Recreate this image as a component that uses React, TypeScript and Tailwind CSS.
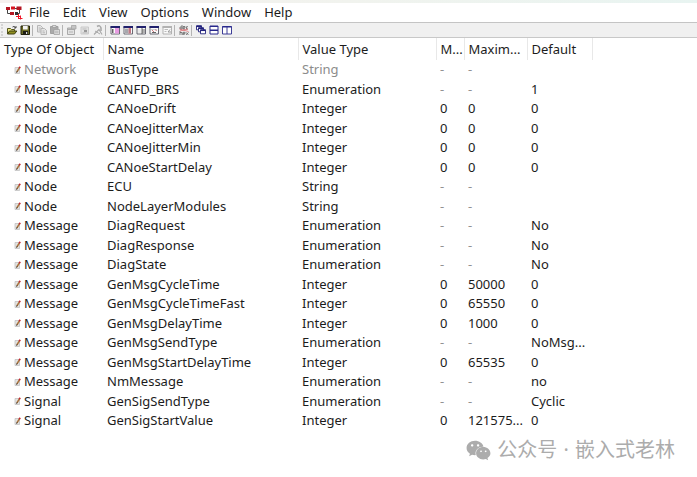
import React from 'react';
import { FaWeixin } from 'react-icons/fa6';

type Row = {
  object: string;
  name: string;
  valueType: string;
  min: string;
  max: string;
  value: string;
  inactive?: boolean;
};

const menus = ['File', 'Edit', 'View', 'Options', 'Window', 'Help'];

const columns = [
  { label: 'Type Of Object', width: 'w-[103px]' },
  { label: 'Name', width: 'w-[195px]' },
  { label: 'Value Type', width: 'w-[138px]' },
  { label: 'M...', width: 'w-[28px]' },
  { label: 'Maxim...', width: 'w-[63px]' },
  { label: 'Default', width: 'w-[65px]' },
];

const rows: Row[] = [
  { object: 'Network', name: 'BusType', valueType: 'String', min: '-', max: '-', value: '', inactive: true },
  { object: 'Message', name: 'CANFD_BRS', valueType: 'Enumeration', min: '-', max: '-', value: '1' },
  { object: 'Node', name: 'CANoeDrift', valueType: 'Integer', min: '0', max: '0', value: '0' },
  { object: 'Node', name: 'CANoeJitterMax', valueType: 'Integer', min: '0', max: '0', value: '0' },
  { object: 'Node', name: 'CANoeJitterMin', valueType: 'Integer', min: '0', max: '0', value: '0' },
  { object: 'Node', name: 'CANoeStartDelay', valueType: 'Integer', min: '0', max: '0', value: '0' },
  { object: 'Node', name: 'ECU', valueType: 'String', min: '-', max: '-', value: '' },
  { object: 'Node', name: 'NodeLayerModules', valueType: 'String', min: '-', max: '-', value: '' },
  { object: 'Message', name: 'DiagRequest', valueType: 'Enumeration', min: '-', max: '-', value: 'No' },
  { object: 'Message', name: 'DiagResponse', valueType: 'Enumeration', min: '-', max: '-', value: 'No' },
  { object: 'Message', name: 'DiagState', valueType: 'Enumeration', min: '-', max: '-', value: 'No' },
  { object: 'Message', name: 'GenMsgCycleTime', valueType: 'Integer', min: '0', max: '50000', value: '0' },
  { object: 'Message', name: 'GenMsgCycleTimeFast', valueType: 'Integer', min: '0', max: '65550', value: '0' },
  { object: 'Message', name: 'GenMsgDelayTime', valueType: 'Integer', min: '0', max: '1000', value: '0' },
  { object: 'Message', name: 'GenMsgSendType', valueType: 'Enumeration', min: '-', max: '-', value: 'NoMsg...' },
  { object: 'Message', name: 'GenMsgStartDelayTime', valueType: 'Integer', min: '0', max: '65535', value: '0' },
  { object: 'Message', name: 'NmMessage', valueType: 'Enumeration', min: '-', max: '-', value: 'no' },
  { object: 'Signal', name: 'GenSigSendType', valueType: 'Enumeration', min: '-', max: '-', value: 'Cyclic' },
  { object: 'Signal', name: 'GenSigStartValue', valueType: 'Integer', min: '0', max: '121575...', value: '0' },
];

function AppLogo() {
  return (
    <svg viewBox="0 0 17 14" className="h-[14px] w-[17px] shrink-0" aria-hidden="true">
      <path d="M1.5 4v3.5h3M8.5 2.5h3M13.5 4v3.5h-3M5 2.5h1" fill="none" stroke="#444" />
      <rect x="0" y="1" width="4" height="3" fill="#b51622" />
      <rect x="5" y="0.5" width="4" height="3" fill="#d8121e" />
      <rect x="10.5" y="0.5" width="5" height="3.5" fill="#b51622" />
      <rect x="4" y="6" width="4" height="3" fill="#b51622" />
      <rect x="9" y="6" width="3" height="3" fill="#333" />
      <path d="M10 10.5h5M12.5 8v4M14.5 9.5v4M12 12.5h4.5" fill="none" stroke="#f01828" />
    </svg>
  );
}

function PencilIcon() {
  return (
    <svg viewBox="0 0 8 8" className="h-2 w-2 shrink-0" aria-hidden="true">
      <path d="M1 1.5h4.5v6H1z" fill="#e4e4e4" stroke="#bcbcbc" strokeWidth="0.7" />
      <path d="M2.8 6 5.4 2" stroke="#a8743e" strokeWidth="1.5" />
      <path d="M2.5 6.6l.6-1.2" stroke="#333" />
      <path d="M5.2 2.2 6.2.7" stroke="#c2252d" strokeWidth="1.6" />
    </svg>
  );
}

function OpenIcon() {
  return (
    <>
      <path d="M0.5 9V3.5h3l1 1h3V6" fill="#e6e37a" stroke="#55551a" />
      <path d="M0.5 9 2.5 6h7.3L7.5 9z" fill="#8f8f20" stroke="#3f3f10" />
      <path d="M5.5 2q1.5-1.5 3 .5M9 1v2H7" fill="none" stroke="#222" strokeWidth="0.8" />
    </>
  );
}

function SaveIcon() {
  return (
    <>
      <path d="M1 1h8.5v8.5H1z" fill="#6b6b24" stroke="#22220c" />
      <path d="M3 1h4.7v3.5H3z" fill="#f4f4f4" />
      <path d="M3 6h5v3.5H3z" fill="#1c1c14" />
      <path d="M6 7h1.2v2H6z" fill="#ddd" />
    </>
  );
}

function CopyIcon() {
  return (
    <g fill="#e6e6e6" stroke="#b0b0b0" strokeWidth="0.9">
      <path d="M0.5 0.5h3L5.5 2.5V7h-5z" />
      <path d="M4 3.5h3.5l2 2v4H4z" />
      <path d="M5.5 6h2M5.5 7.8h2.5M1.7 3h2M1.7 5h2" />
    </g>
  );
}

function PasteIcon() {
  return (
    <>
      <path d="M0.5 1.5H8v7H0.5z" fill="#aaa" stroke="#a0a0a0" />
      <path d="M2.5 0.5H6v2H2.5z" fill="#ddd" stroke="#989898" strokeWidth="0.7" />
      <path d="M4 4.5h5.5v5H4z" fill="#e4e4e4" stroke="#a0a0a0" strokeWidth="0.8" />
      <path d="M5 6.2h3.5M5 7.8h3.5" stroke="#a0a0a0" strokeWidth="0.7" />
    </>
  );
}

function FormIcon() {
  return (
    <>
      <path d="M0.5 3h7v6.5h-7z" fill="#e2e2e2" stroke="#aaa" />
      <path d="M1 3.5h6V5H1z" fill="#aaa" />
      <path d="M4.5 0.5H9V4H4.5z" fill="#c4c4c4" stroke="#a4a4a4" strokeWidth="0.8" />
      <path d="M2 7h4" stroke="#b4b4b4" />
    </>
  );
}

function SheetIcon() {
  return (
    <>
      <path d="M1 2h7.5v7H1z" fill="#e2e2e2" stroke="#cacaca" />
      <path d="M2.5 4h4M2.5 7.8h5" stroke="#b4b4b4" strokeWidth="0.8" />
      <path d="M4 5h3v2H4z" fill="#999" />
    </>
  );
}

function ToolIcon() {
  return (
    <g fill="none" stroke="#aaa">
      <path d="M4 1.5q3-2 4 1.5v3" strokeWidth="1.6" />
      <path d="M1 9.5 6 4.5l3 5" strokeWidth="1.2" />
      <path d="M2 6l5 3" />
    </g>
  );
}

type WindowIconProps = { children?: React.ReactNode; frame?: string; bar?: string };

function WindowIcon({ children, frame = '#5c5c66', bar = '#20206c' }: WindowIconProps) {
  return (
    <>
      <path d="M1 1.5h8.5V9H1z" fill="#fafafa" stroke={frame} strokeWidth="0.9" />
      <path d="M0.5 1H10v2H0.5z" fill={bar} />
      {children}
    </>
  );
}

function DecHexIcon() {
  return (
    <>
      <g fill="none" stroke="#555" strokeWidth="0.7">
        <path d="M3 0v4H1V2h2M4 3h2V1.5H4V4h2M9 1.7H7.5V4H9" />
        <path d="M1 6v4M1 7.5h2V10M4 8.7h2V7.3H4V10h2M7 7.3l2.5 2.7M9.5 7.3 7 10" />
      </g>
      <path d="M0.5 4 9.5 6.5M1 6l8-2" stroke="#dc5c62" strokeWidth="0.7" />
    </>
  );
}

function CascadeIcon() {
  return (
    <g fill="#fff" stroke="#20207c" strokeWidth="0.9">
      {[0, 2, 4].map((n) => (
        <g key={n}>
          <path d={`M${0.5 + n} ${0.8 + n}h5v4h-5z`} />
          <path d={`M${0.5 + n} ${1.3 + n}h5`} strokeWidth="1.5" />
        </g>
      ))}
    </g>
  );
}

const toolGroups: { label: string; disabled?: boolean; icon: React.ReactNode }[][] = [
  [
    { label: 'Open', icon: <OpenIcon /> },
    { label: 'Save', icon: <SaveIcon /> },
  ],
  [
    { label: 'Copy', disabled: true, icon: <CopyIcon /> },
    { label: 'Paste', disabled: true, icon: <PasteIcon /> },
  ],
  [
    { label: 'Edit object', disabled: true, icon: <FormIcon /> },
    { label: 'New object', disabled: true, icon: <SheetIcon /> },
    { label: 'Consistency check', disabled: true, icon: <ToolIcon /> },
  ],
  [
    {
      label: 'Overall view',
      icon: (
        <WindowIcon>
          <path d="M5 3h4v5.5H5z" fill="#e79be2" />
          <path d="M2.5 4v4M2.5 5H4M2.5 7H4" stroke="#444" strokeWidth="0.8" />
        </WindowIcon>
      ),
    },
    {
      label: 'Signal list',
      icon: (
        <WindowIcon>
          <path d="M2 3.5h3v5H2z" fill="#b4b4b8" />
          <path d="M5.5 3h2.5v5.5H5.5z" fill="#d4707c" />
          <path d="M2 5h6M2 7h6" stroke="#8a8a94" strokeWidth="0.6" />
        </WindowIcon>
      ),
    },
    {
      label: 'Message list',
      icon: (
        <WindowIcon>
          <path d="M6 3v6M6 5h3M6 7h3" stroke="#444" strokeWidth="0.8" />
          <path d="M2 5h3M2 7h3" stroke="#ccc" strokeWidth="0.7" />
        </WindowIcon>
      ),
    },
    {
      label: 'Attribute list',
      icon: (
        <WindowIcon>
          <path d="M2 4.5h6" stroke="#bbb" strokeWidth="0.7" />
          <path d="M3 5 5 7M6.5 4.5l1 1.5" stroke="#c8666c" strokeWidth="0.9" />
          <path d="M3 7.5h4" stroke="#666" />
        </WindowIcon>
      ),
    },
    {
      label: 'Value tables',
      disabled: true,
      icon: (
        <WindowIcon frame="#aaa" bar="#b2b2b2">
          <path d="M2.5 4.5H6M2.5 6.5h2" stroke="#bbb" />
          <path d="M6 7l2-2.5M6 7h3" stroke="#999" />
        </WindowIcon>
      ),
    },
  ],
  [{ label: 'Dec/Hex', icon: <DecHexIcon /> }],
  [
    { label: 'Cascade', icon: <CascadeIcon /> },
    {
      label: 'Tile horizontally',
      icon: (
        <>
          <path d="M1 1h8v8H1zM1 5h8" fill="#fff" stroke="#28288c" />
          <path d="M1 1.5h8M1 5.5h8" stroke="#28288c" />
        </>
      ),
    },
    {
      label: 'Tile vertically',
      icon: (
        <>
          <path d="M0.5 1.5h9V9h-9zM5 1.5V9" fill="#fff" stroke="#28288c" strokeWidth="0.9" />
          <path d="M0.5 1.8h9" stroke="#28288c" strokeWidth="1.4" />
        </>
      ),
    },
  ],
];

function Toolbar() {
  return (
    <div className="flex h-4 items-center border-y border-t-[#c4c4c4] border-b-[#c8c8c8] bg-[#f0f0f0] pl-px">
      <div className="mr-0.5 h-3 border-l-2 border-dotted border-[#d4d4d4]" />
      {toolGroups.map((group, index) => (
        <div key={group[0].label} className="flex items-center">
          {index > 0 && <div className="mr-0.5 ml-px h-[11px] w-px bg-[#b4b4b4]" />}
          {group.map(({ label, disabled, icon }) => (
            <button
              key={label}
              type="button"
              aria-label={label}
              disabled={disabled}
              className="flex w-[13px] items-center justify-center"
            >
              <svg viewBox="0 0 10 10" className="h-[10px] w-[10px]" aria-hidden="true">
                {icon}
              </svg>
            </button>
          ))}
        </div>
      ))}
    </div>
  );
}

function AttributeTable() {
  const numberColor = (text: string) => (text === '-' ? 'text-[#929292]' : '');

  return (
    <table className="w-full table-fixed border-collapse text-left whitespace-nowrap">
      <thead>
        <tr className="h-[22px]">
          {columns.map(({ label, width }) => (
            <th key={label} scope="col" className={`${width} border-r border-[#e8e8e8] pl-1 font-normal`}>
              {label}
            </th>
          ))}
          <td />
        </tr>
      </thead>
      <tbody>
        {rows.map(({ object, name, valueType, min, max, value, inactive }) => (
          <tr key={name} className="h-[19px] even:h-5">
            <td className={`pl-[14px] ${inactive ? 'text-[#8c8c8c]' : ''}`}>
              <div className="flex items-center gap-0.5">
                <PencilIcon />
                {object}
              </div>
            </td>
            <td className="pl-1">{name}</td>
            <td className={`pl-1 ${inactive ? 'text-[#8c8c8c]' : ''}`}>{valueType}</td>
            <td className={`pl-1 ${numberColor(min)}`}>{min}</td>
            <td className={`pl-1 ${numberColor(max)}`}>{max}</td>
            <td className="pl-1">{value}</td>
            <td />
          </tr>
        ))}
      </tbody>
    </table>
  );
}

function App() {
  return (
    <div className="min-h-screen bg-white font-['Noto_Sans','Noto_Sans_CJK_SC',sans-serif] text-[13px] leading-[19px] text-[#1c1c1c]">
      <div className="h-[3px] bg-linear-to-r from-[#f6f0ee] via-[#f1f3ee] to-[#e8f4f1]" />
      <nav className="flex h-[19px] items-center pl-[6px]">
        <AppLogo />
        <div className="ml-[6px] flex gap-[13px]">
          {menus.map((menu) => (
            <button key={menu} type="button">
              {menu}
            </button>
          ))}
        </div>
      </nav>
      <Toolbar />
      <AttributeTable />
      <footer className="flex items-center justify-end gap-[6px] pt-1.5 pr-[22px] text-[20px] leading-[28px] text-[#acacac]">
        <FaWeixin className="h-[23px] w-[25px]" />
        <span>
          公众号 <span className="mx-px">·</span> 嵌入式老林
        </span>
      </footer>
    </div>
  );
}

export default App;
